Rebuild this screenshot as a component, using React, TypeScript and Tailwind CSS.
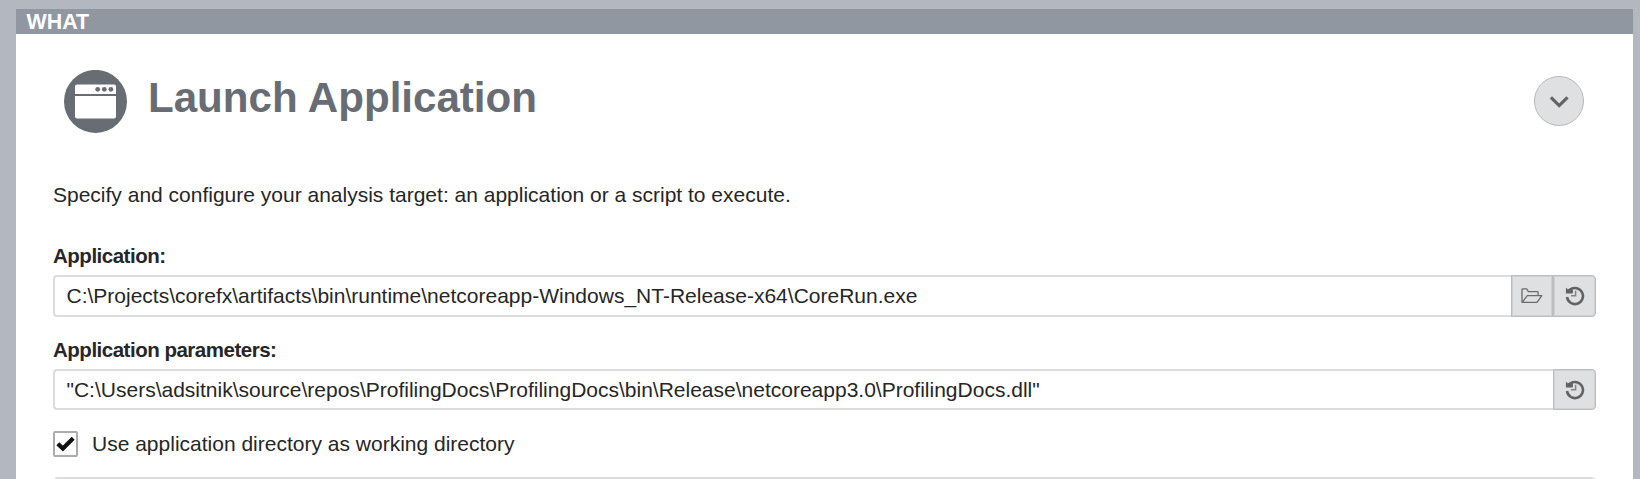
import type { ReactNode } from 'react';

function WindowIcon() {
  return (
    <svg width="64" height="64" viewBox="0 0 64 64" className="block shrink-0">
      <circle cx="31.5" cy="31.4" r="31.5" fill="#686d74" />
      <path d="M13 14.4H50Q52 14.4 52 16.4V24H11V16.4Q11 14.4 13 14.4Z" fill="#fff" />
      <path d="M11 26H52V46.5Q52 48.5 50 48.5H13Q11 48.5 11 46.5Z" fill="#fff" />
      <circle cx="33.7" cy="19.3" r="2.4" fill="#686d74" />
      <circle cx="40.3" cy="19.3" r="2.4" fill="#686d74" />
      <circle cx="46.9" cy="19.3" r="2.4" fill="#686d74" />
    </svg>
  );
}

function FolderIcon() {
  return (
    <svg width="22" height="16" viewBox="0 0 22 16" fill="none" stroke="#6b6b6b" strokeWidth="1.3" strokeLinejoin="round">
      <path d="M1 14.2V1.6Q1 .9 1.7 .9H5.6L7.4 3.7H16.4Q17.1 3.7 17.1 4.4V7.6" />
      <path d="M1.2 14.4L6.3 7.7H20.8L16 14.4Z" />
    </svg>
  );
}

function HistoryIcon() {
  return (
    <svg width="20" height="20" viewBox="0 0 20 20" fill="none">
      <path d="M2 11A8 8 0 1 0 5.2 3.6" stroke="#636363" strokeWidth="2.6" />
      <path d="M.9 1.8L2.8 3.2L7.4 1.2L8 5.6L7.6 7.6H.9Z" fill="#636363" />
      <path d="M10.6 4.8V9.7H6" stroke="#858585" strokeWidth="1.5" />
    </svg>
  );
}

function SideButton({ label, className, children }: { label: string; className: string; children: ReactNode }) {
  return (
    <button
      aria-label={label}
      className={`flex h-full shrink-0 items-center justify-center border border-[#bcbdbe] bg-[#dfe0e2] shadow-[inset_0_0_0_1px_#d0d1d2] ${className}`}
    >
      {children}
    </button>
  );
}

export default function App() {
  return (
    <div className="h-[479px] overflow-hidden bg-[#b3b7c0] pt-[9px] pr-[7px] pl-4 font-['Liberation_Sans',Arial,sans-serif] text-[21px] text-[#262626]">
      <section className="h-[480px] bg-white">
        <header className="flex h-[25px] items-center bg-[#9197a1] pt-[2px] pl-[10.5px] text-[21.4px] leading-[25px] font-bold text-white">
          WHAT
        </header>
        <div className="pr-[37px] pl-[37px]">
          <div className="flex h-[144px] items-start pt-9">
            <div className="pl-[11px]">
              <WindowIcon />
            </div>
            <h1 className="pt-px pl-5 text-[42.1px] leading-[54px] font-bold whitespace-nowrap text-[#686d74]">Launch Application</h1>
            <button
              aria-label="Collapse"
              className="mt-[6px] mr-3 ml-auto flex size-[50px] items-center justify-center rounded-full border border-[#b8b9ba] bg-[#dfe0e2] pt-[2px]"
            >
              <svg width="20" height="12" viewBox="0 0 20 12" fill="none" stroke="#636363" strokeWidth="3.2">
                <path d="M1.9 1.4L10.2 9.6L18.5 1.4" />
              </svg>
            </button>
          </div>
          <p className="h-[63px] pt-[5px] leading-6 whitespace-nowrap">Specify and configure your analysis target: an application or a script to execute.</p>
          <div className="h-[34px] pt-[3px] text-[20.5px] leading-6 font-bold tracking-[-0.49px] whitespace-nowrap">Application:</div>
          <div className="flex h-[42px]">
            <div className="flex flex-1 items-center rounded-l-[4px] border-2 border-r-0 border-[#dcdcdc] pl-[11.5px] leading-6 whitespace-nowrap">
              C:\Projects\corefx\artifacts\bin\runtime\netcoreapp-Windows_NT-Release-x64\CoreRun.exe
            </div>
            <SideButton label="Browse" className="w-[42px]">
              <FolderIcon />
            </SideButton>
            <SideButton label="Application history" className="w-[43px] rounded-r-[4px]">
              <HistoryIcon />
            </SideButton>
          </div>
          <div className="h-[52px] pt-[21px] text-[20.5px] leading-6 font-bold tracking-[-0.49px] whitespace-nowrap">Application parameters:</div>
          <div className="flex h-[41px]">
            <div className="flex flex-1 items-center rounded-l-[4px] border-2 border-r-0 border-[#dcdcdc] pl-[11.5px] leading-6 whitespace-nowrap">
              "C:\Users\adsitnik\source\repos\ProfilingDocs\ProfilingDocs\bin\Release\netcoreapp3.0\ProfilingDocs.dll"
            </div>
            <SideButton label="Parameter history" className="w-[43px] rounded-r-[4px]">
              <HistoryIcon />
            </SideButton>
          </div>
          <div className="mt-[21px] flex h-[26px] items-center">
            <span className="flex h-[26px] w-[25px] items-center justify-center rounded-[2px] border-2 border-[#acacac]">
              <svg width="19" height="16" viewBox="0 0 19 16" fill="none" stroke="#111" strokeWidth="4.2">
                <path d="M1.8 7.8L6.9 12.6L17.2 2.3" />
              </svg>
            </span>
            <span className="pl-[14px] leading-6 whitespace-nowrap">Use application directory as working directory</span>
          </div>
          <div className="mt-5 h-10 rounded-t-[5px] border-2 border-[#dcdcdc]" />
        </div>
      </section>
    </div>
  );
}
